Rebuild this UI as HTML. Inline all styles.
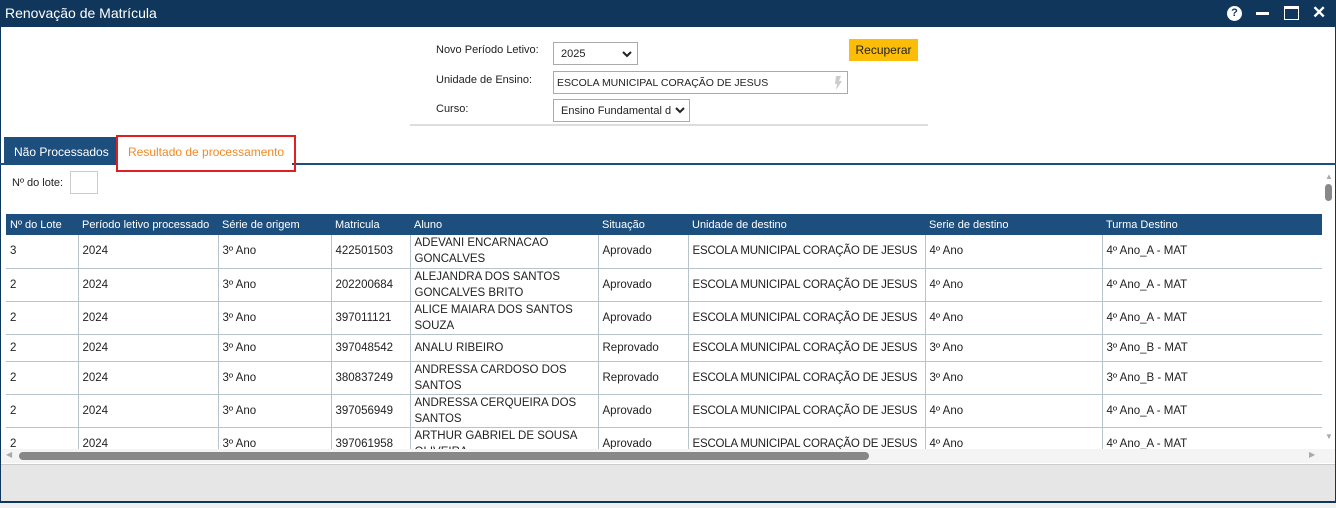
<!DOCTYPE html>
<html><head><meta charset="utf-8"><style>
*{margin:0;padding:0;box-sizing:border-box}
body{width:1336px;height:508px;background:#fff;font-family:"Liberation Sans",sans-serif;color:#222;position:relative;overflow:hidden}
.a{position:absolute}
.title{left:0;top:0;width:1336px;height:27px;background:#10365c;color:#fff;font-size:14px;line-height:27px;padding-left:5px}
.lbl{font-size:11px;color:#222}
.sel{border:1px solid #aaa;background:#fff;font-size:11px;line-height:20px;padding-left:7px}
table{border-collapse:collapse;table-layout:fixed;font-size:11.5px}
th{background:#1d4f7e;color:#fff;font-weight:normal;text-align:left;font-size:11px;height:21px;padding-left:4px;white-space:nowrap;overflow:hidden}
td{border-right:1px solid #b8c4cc;border-bottom:1px solid #b8c4cc;padding:0 4px;line-height:16px;vertical-align:middle;overflow:hidden}
td:last-child{border-right:none}
td.u{white-space:nowrap;letter-spacing:-0.2px}
</style></head><body>
<div class="a" style="left:0;top:27px;width:1px;height:475px;background:#10365c"></div>
<div class="a" style="right:0;top:27px;width:1px;height:475px;background:#10365c"></div>
<div class="a title">Renovação de Matrícula</div>
<div class="a" style="left:1227px;top:6px;width:15px;height:15px;border-radius:50%;background:#fff;color:#10365c;font-size:11px;font-weight:bold;text-align:center;line-height:15px">?</div>
<div class="a" style="left:1256px;top:12px;width:13px;height:3px;background:#fff"></div>
<div class="a" style="left:1284px;top:6px;width:15px;height:14px;border:1px solid #fff;border-top-width:3px"></div>
<div class="a" style="left:1312px;top:3px;color:#fff;font-size:17px;font-weight:bold">✕</div>

<div class="a lbl" style="left:436px;top:44px">Novo Período Letivo:</div>
<div class="a sel" style="left:553px;top:42px;width:85px;height:23px;line-height:22px">2025<svg class="a" style="right:5px;top:8px" width="10" height="7" viewBox="0 0 10 7"><path d="M1 1l4 4 4-4" stroke="#222" stroke-width="2" fill="none"/></svg></div>
<div class="a" style="left:849px;top:39px;width:69px;height:22px;background:#fbbd08;font-size:12px;line-height:22px;text-align:center">Recuperar</div>
<div class="a lbl" style="left:436px;top:74px">Unidade de Ensino:</div>
<div class="a sel" style="left:553px;top:71px;width:295px;height:23px;padding-left:3px;line-height:22px;font-size:10.5px">ESCOLA MUNICIPAL CORAÇÃO DE JESUS<svg class="a" style="right:5px;top:4px" width="8" height="14" viewBox="0 0 8 14"><path d="M2 0h5l-2 5h3l-6 9 1-6H1z" fill="#ccc"/></svg></div>
<div class="a lbl" style="left:436px;top:103px">Curso:</div>
<div class="a sel" style="left:553px;top:99px;width:137px;height:23px;line-height:22px;padding-left:7px;overflow:hidden;white-space:nowrap">Ensino Fundamental d<span style="position:absolute;right:0;top:0;background:#fff;width:16px;height:21px"><svg class="a" style="left:2px;top:7px" width="10" height="7" viewBox="0 0 10 7"><path d="M1 1l4 4 4-4" stroke="#222" stroke-width="2" fill="none"/></svg></span></div>
<div class="a" style="left:410px;top:124px;width:518px;height:2px;background:#ddd"></div>

<div class="a" style="left:0;top:163px;width:1336px;height:2px;background:#1d4f7e"></div>
<div class="a" style="left:4px;top:137px;width:112px;height:28px;background:#1d4f7e;color:#fff;font-size:12px;line-height:30px;padding-left:10px">Não Processados</div>
<div class="a" style="left:118px;top:137px;width:174px;height:30px;background:#fff;color:#f08a24;font-size:12px;line-height:30px;padding-left:10px">Resultado de processamento</div>
<div class="a" style="left:116px;top:135px;width:180px;height:37px;border:2px solid #e02020"></div>

<div class="a" style="left:12px;top:177px;font-size:11px">Nº do lote:</div>
<div class="a" style="left:70px;top:171px;width:28px;height:23px;border:1px solid #ccc"></div>

<div class="a" style="left:6px;top:214px;width:1316px;height:235px;overflow:hidden">
<table style="width:1316px">
<colgroup><col style="width:72px"><col style="width:140px"><col style="width:113px"><col style="width:79px"><col style="width:188px"><col style="width:90px"><col style="width:237px"><col style="width:177px"><col style="width:220px"></colgroup>
<tr><th>Nº do Lote</th><th>Período letivo processado</th><th>Série de origem</th><th>Matricula</th><th>Aluno</th><th>Situação</th><th>Unidade de destino</th><th>Serie de destino</th><th>Turma Destino</th></tr>
<tr style="height:33px"><td>3</td><td>2024</td><td>3º Ano</td><td>422501503</td><td>ADEVANI ENCARNACAO GONCALVES</td><td>Aprovado</td><td class="u">ESCOLA MUNICIPAL CORAÇÃO DE JESUS</td><td>4º Ano</td><td>4º Ano_A - MAT</td></tr>
<tr style="height:33px"><td>2</td><td>2024</td><td>3º Ano</td><td>202200684</td><td>ALEJANDRA DOS SANTOS GONCALVES BRITO</td><td>Aprovado</td><td class="u">ESCOLA MUNICIPAL CORAÇÃO DE JESUS</td><td>4º Ano</td><td>4º Ano_A - MAT</td></tr>
<tr style="height:33px"><td>2</td><td>2024</td><td>3º Ano</td><td>397011121</td><td>ALICE MAIARA DOS SANTOS SOUZA</td><td>Aprovado</td><td class="u">ESCOLA MUNICIPAL CORAÇÃO DE JESUS</td><td>4º Ano</td><td>4º Ano_A - MAT</td></tr>
<tr style="height:27px"><td>2</td><td>2024</td><td>3º Ano</td><td>397048542</td><td>ANALU RIBEIRO</td><td>Reprovado</td><td class="u">ESCOLA MUNICIPAL CORAÇÃO DE JESUS</td><td>3º Ano</td><td>3º Ano_B - MAT</td></tr>
<tr style="height:32px"><td>2</td><td>2024</td><td>3º Ano</td><td>380837249</td><td>ANDRESSA CARDOSO DOS SANTOS</td><td>Reprovado</td><td class="u">ESCOLA MUNICIPAL CORAÇÃO DE JESUS</td><td>3º Ano</td><td>3º Ano_B - MAT</td></tr>
<tr style="height:33px"><td>2</td><td>2024</td><td>3º Ano</td><td>397056949</td><td>ANDRESSA CERQUEIRA DOS SANTOS</td><td>Aprovado</td><td class="u">ESCOLA MUNICIPAL CORAÇÃO DE JESUS</td><td>4º Ano</td><td>4º Ano_A - MAT</td></tr>
<tr style="height:33px"><td>2</td><td>2024</td><td>3º Ano</td><td>397061958</td><td>ARTHUR GABRIEL DE SOUSA OLIVEIRA</td><td>Aprovado</td><td class="u">ESCOLA MUNICIPAL CORAÇÃO DE JESUS</td><td>4º Ano</td><td>4º Ano_A - MAT</td></tr>
</table></div>

<div class="a" style="left:1325px;top:172px;color:#aaa;font-size:8px">▲</div>
<div class="a" style="left:1325px;top:184px;width:7px;height:17px;border-radius:4px;background:#888"></div>
<div class="a" style="left:1325px;top:432px;color:#aaa;font-size:8px">▼</div>
<div class="a" style="left:1px;top:449px;width:1334px;height:14px;background:#f4f4f4"></div>
<div class="a" style="left:6px;top:450px;color:#aaa;font-size:8px">◀</div>
<div class="a" style="left:19px;top:452px;width:850px;height:8px;border-radius:4px;background:#888"></div>
<div class="a" style="left:1309px;top:450px;color:#aaa;font-size:8px">▶</div>
<div class="a" style="left:1px;top:464px;width:1334px;height:37px;background:#e6e6e6;border-top:1px solid #ccc"></div>
<div class="a" style="left:0;top:501px;width:1336px;height:2px;background:#10365c"></div>
<div class="a" style="left:0;top:503px;width:1336px;height:5px;background:#f0f0f0"></div>
</body></html>
